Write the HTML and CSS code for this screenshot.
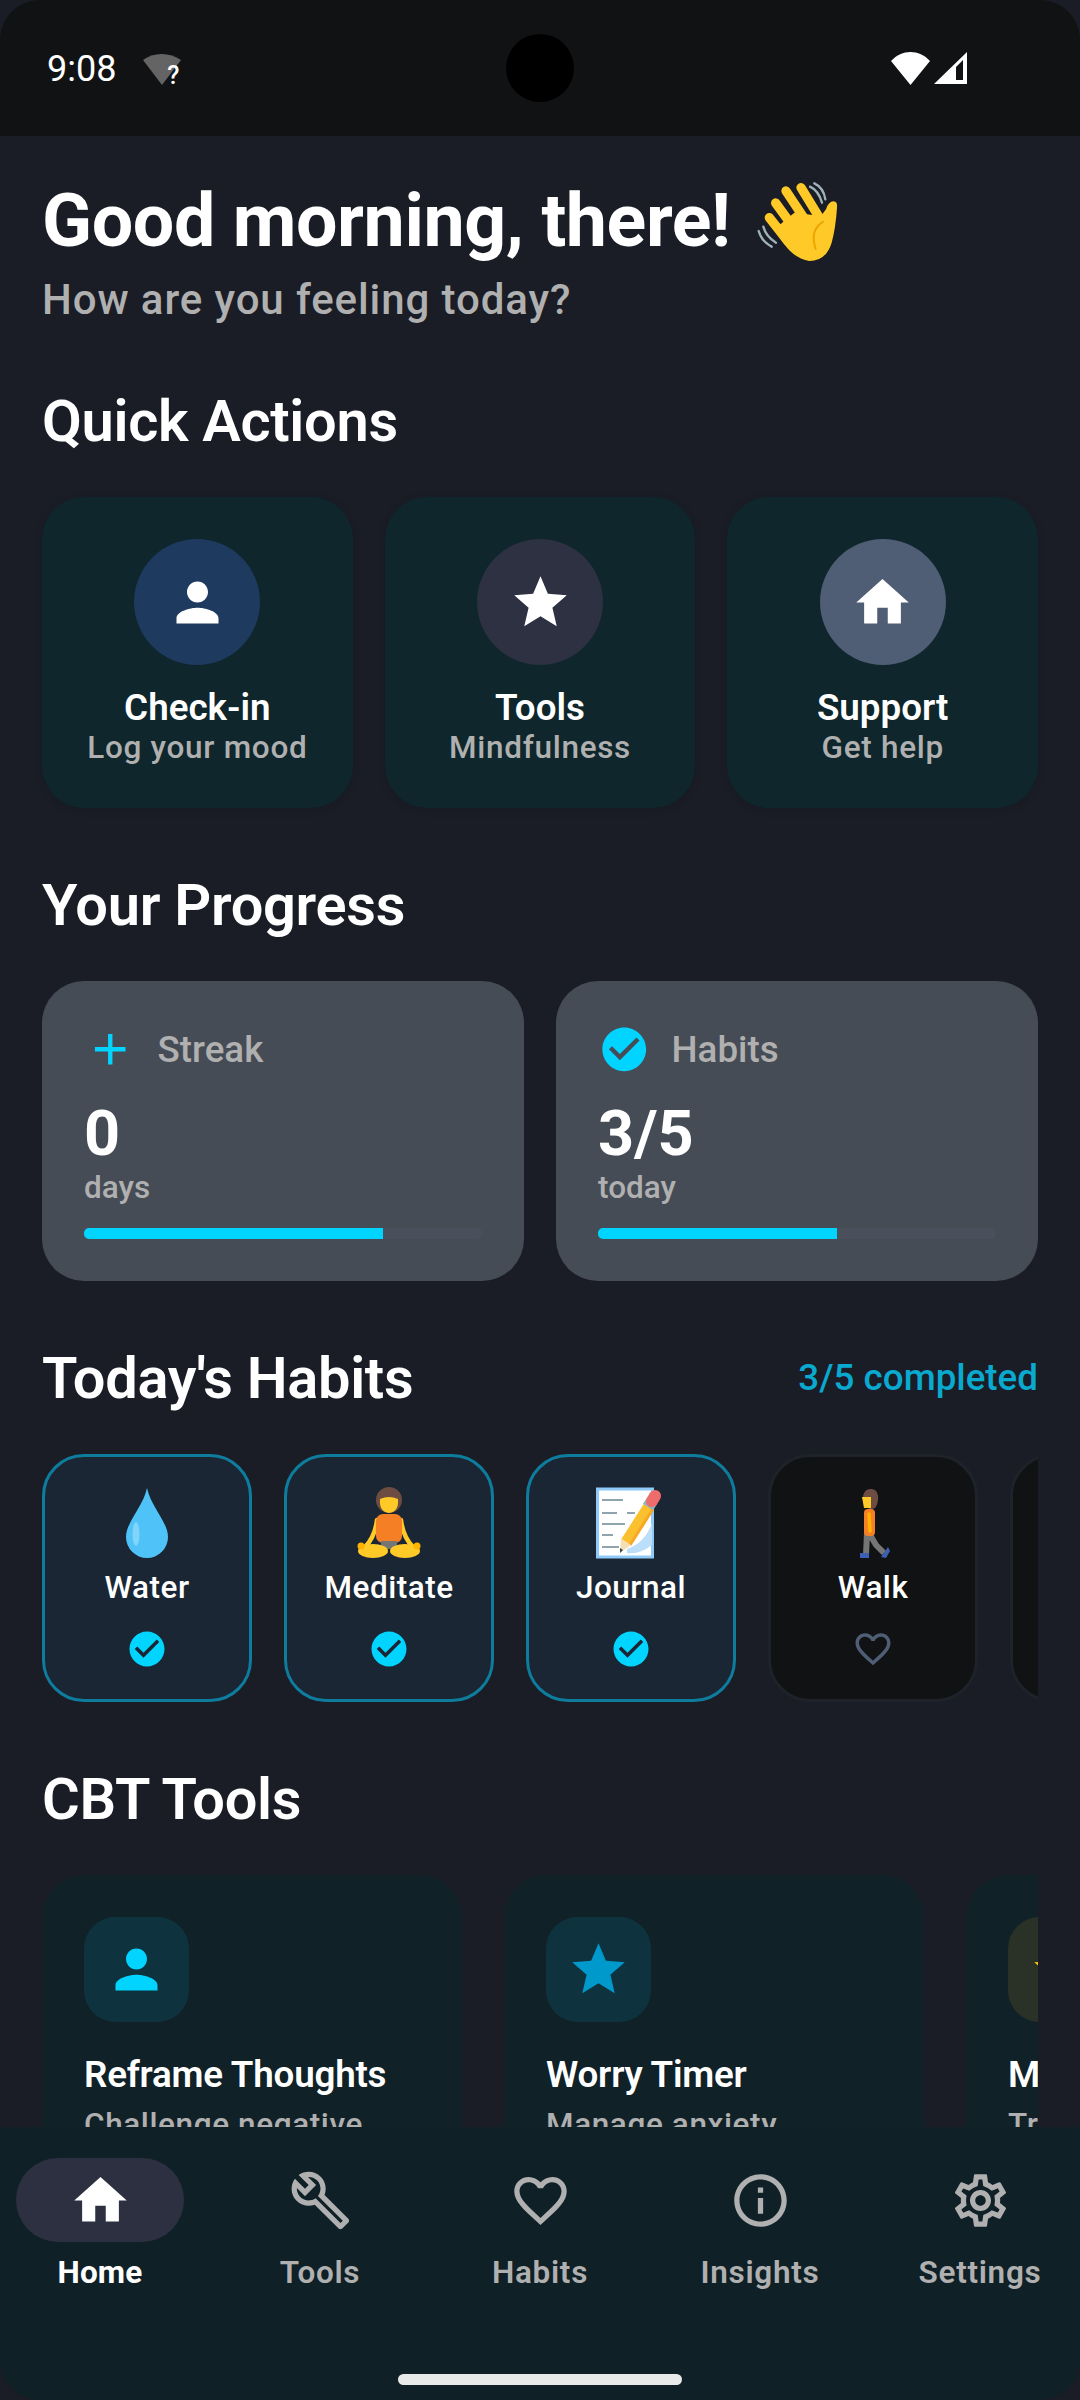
FILE: index.html
```html
<!DOCTYPE html>
<html lang="en">
<head>
  <meta charset="UTF-8">
  <meta name="viewport" content="width=device-width, initial-scale=1.0">
  <title>Wellness Home</title>
  <link rel="stylesheet" href="styles.css">
</head>
<body>
  <div class="app">
    <header class="status-bar">
      <div class="status-left">
        <span class="clock">9:08</span>
        <span class="wifi-unknown">
          <svg width="40" height="32" viewBox="0 0 40 32"><path class="wifi-dim" d="M1 7 C11 -1 28 -1 39 7 L20 32z"/></svg>
          <span class="wifi-mark">?</span>
        </span>
      </div>
      <div class="camera"></div>
      <div class="status-right">
        <svg width="40" height="33" viewBox="0 0 40 33"><path class="fill-white" d="M0 9 C11 -3 28 -3 39 9 L19.500 33z"/></svg>
        <svg width="33" height="32" viewBox="0 0 33 32"><path class="fill-white" d="M0 32 L33 0 V32z M22 15 V28 H29 V8z" fill-rule="evenodd"/></svg>
      </div>
    </header>

    <main class="content">
      <h1 class="greeting">Good morning, there!
        <svg class="wave" width="110" height="100" viewBox="0 0 330 300">
          <g fill="none" stroke="#9fb2ba" stroke-width="7" stroke-linecap="round">
            <path d="M207 47 Q232 58 243 95"/>
            <path d="M220 37 Q248 50 253 85"/>
            <path d="M67 167 Q75 197 105 215"/>
            <path d="M53 180 Q62 212 92 227"/>
          </g>
          <g stroke="#ffca28" stroke-width="28" stroke-linecap="round">
            <path d="M85 140 L140 210"/>
            <path d="M104 96 L165 180"/>
            <path d="M135 60 L195 150"/>
            <path d="M180 50 L235 140"/>
          </g>
          <path fill="#ffca28" d="M100 175 L160 125 L240 135 L255 115 Q262 92 278 91 Q290 92 288 110 Q284 170 272 215 Q255 270 205 270 Q160 262 130 220z"/>
          <path fill="none" stroke="#eda600" stroke-width="6" stroke-linecap="round" d="M246 152 Q216 172 218 205 Q220 222 224 234"/>
        </svg>
      </h1>
      <p class="greeting-sub">How are you feeling today?</p>

      <section class="section">
        <h2 class="section-title">Quick Actions</h2>
        <div class="quick-row">
          <div class="quick-card">
            <div class="quick-icon navy"><svg class="icon-lg fill-white" viewBox="0 0 24 24"><path d="M12 12c2.210 0 4-1.790 4-4s-1.790-4-4-4-4 1.790-4 4 1.790 4 4 4zm0 2c-2.670 0-8 1.340-8 4v2h16v-2c0-2.660-5.330-4-8-4z"/></svg></div>
            <div class="quick-title">Check-in</div>
            <div class="quick-sub">Log your mood</div>
          </div>
          <div class="quick-card">
            <div class="quick-icon slate"><svg class="icon-lg fill-white" viewBox="0 0 24 24"><path d="M12 17.270L18.180 21l-1.640-7.030L22 9.240l-7.190-.61L12 2 9.190 8.630 2 9.240l5.460 4.730L5.820 21z"/></svg></div>
            <div class="quick-title">Tools</div>
            <div class="quick-sub">Mindfulness</div>
          </div>
          <div class="quick-card">
            <div class="quick-icon steel"><svg class="icon-lg fill-white" viewBox="0 0 24 24"><path d="M10 20v-6h4v6h5v-8h3L12 3 2 12h3v8z"/></svg></div>
            <div class="quick-title">Support</div>
            <div class="quick-sub">Get help</div>
          </div>
        </div>
      </section>

      <section class="section">
        <h2 class="section-title">Your Progress</h2>
        <div class="progress-row">
          <div class="progress-card">
            <div class="progress-head">
              <svg class="icon-md fill-cyan" viewBox="0 0 24 24"><path d="M19 13h-6v6h-2v-6H5v-2h6V5h2v6h6v2z"/></svg>
              <span>Streak</span>
            </div>
            <div class="progress-value">0</div>
            <div class="progress-unit">days</div>
            <div class="bar"><div class="bar-fill" style="width: 75%"></div></div>
          </div>
          <div class="progress-card">
            <div class="progress-head">
              <svg class="icon-md fill-cyan" viewBox="0 0 24 24"><path d="M12 2C6.480 2 2 6.480 2 12s4.480 10 10 10 10-4.480 10-10S17.520 2 12 2zm-2 15l-5-5 1.410-1.410L10 14.170l7.590-7.590L19 8l-9 9z"/></svg>
              <span>Habits</span>
            </div>
            <div class="progress-value">3/5</div>
            <div class="progress-unit">today</div>
            <div class="bar"><div class="bar-fill" style="width: 60%"></div></div>
          </div>
        </div>
      </section>

      <section class="section">
        <div class="section-head">
          <h2 class="section-title">Today's Habits</h2>
          <span class="section-note">3/5 completed</span>
        </div>
        <div class="scroller">
          <div class="habit-card done">
            <svg class="emoji" viewBox="0 0 84 72">
              <path fill="#4fc3f7" d="M42 1 C46 20 63 35 63 50 a21 21 0 0 1 -42 0 C21 35 38 20 42 1z"/>
              <ellipse fill="#81d4fa" cx="31" cy="47" rx="3.500" ry="12"/>
            </svg>
            <div class="habit-name">Water</div>
            <svg class="icon-sm fill-cyan" viewBox="0 0 24 24"><path d="M12 2C6.480 2 2 6.480 2 12s4.480 10 10 10 10-4.480 10-10S17.520 2 12 2zm-2 15l-5-5 1.410-1.410L10 14.170l7.590-7.590L19 8l-9 9z"/></svg>
          </div>
          <div class="habit-card done">
            <svg class="emoji" viewBox="0 0 84 72">
              <circle fill="#6d4c41" cx="42" cy="13" r="13"/>
              <path fill="#ffca28" d="M33 12 Q42 8 51 12 Q52 25 42 26 Q32 25 33 12z"/>
              <path fill="none" stroke="#ffca28" stroke-width="4.500" stroke-linecap="round" d="M30 33 Q28 50 18 60 M54 33 Q56 50 66 60"/>
              <rect fill="#f57f25" x="29" y="27" width="26" height="29" rx="7"/>
              <rect fill="#757575" x="34" y="54" width="16" height="8"/>
              <ellipse fill="#ffca28" cx="26" cy="64" rx="15" ry="7"/>
              <ellipse fill="#ffca28" cx="58" cy="64" rx="15" ry="7"/>
              <circle fill="#ffb300" cx="14" cy="59" r="3.500"/>
              <circle fill="#ffb300" cx="70" cy="59" r="3.500"/>
            </svg>
            <div class="habit-name">Meditate</div>
            <svg class="icon-sm fill-cyan" viewBox="0 0 24 24"><path d="M12 2C6.480 2 2 6.480 2 12s4.480 10 10 10 10-4.480 10-10S17.520 2 12 2zm-2 15l-5-5 1.410-1.410L10 14.170l7.590-7.590L19 8l-9 9z"/></svg>
          </div>
          <div class="habit-card done">
            <svg class="emoji" viewBox="0 0 84 72">
              <rect fill="#fff" stroke="#90caf9" stroke-width="3" x="8.500" y="2" width="55" height="68"/>
              <path fill="none" stroke="#90a4ae" stroke-width="1.800" d="M13 13 H34 M13 26 H28 M38 26 H46 M13 37 H36 M13 48 H24 M13 60 H30"/>
              <path fill="#bbdefb" d="M38 62 Q56 56 63 36 V58 Q50 68 38 66z"/>
              <path stroke="#fbc02d" stroke-width="11" d="M37 55 L60 19"/>
              <path stroke="#f9a825" stroke-width="3" d="M41 58 L64 22"/>
              <path fill="#f5deb3" d="M32 52 L42 58 L31 66z"/>
              <path fill="#37474f" d="M31 61 L34 63 L31 66z"/>
              <path stroke="#90b4bd" stroke-width="12" d="M59 20 L63 14"/>
              <path stroke="#ef6c6c" stroke-width="12" stroke-linecap="round" d="M63 14 L66 9"/>
            </svg>
            <div class="habit-name">Journal</div>
            <svg class="icon-sm fill-cyan" viewBox="0 0 24 24"><path d="M12 2C6.480 2 2 6.480 2 12s4.480 10 10 10 10-4.480 10-10S17.520 2 12 2zm-2 15l-5-5 1.410-1.410L10 14.170l7.590-7.590L19 8l-9 9z"/></svg>
          </div>
          <div class="habit-card">
            <svg class="emoji" viewBox="0 0 84 72">
              <path fill="#6d4c41" d="M32 10 Q33 1 41 2 Q48 3 47 13 Q46 22 41 22 H38z"/>
              <path fill="#ffca28" d="M31 10 H40 V21 H33z"/>
              <path fill="none" stroke="#757575" stroke-width="6" d="M36 46 L35 68 M38 46 L45 58 L53 66"/>
              <rect fill="#f57f25" x="33" y="22" width="11" height="27" rx="4"/>
              <path fill="none" stroke="#ffb300" stroke-width="3.500" stroke-linecap="round" d="M38 27 L39 44"/>
              <path fill="#3f5fb5" d="M29 66 H38 V71 H29z M50 70 L57 60 L59 64 L55 71z"/>
            </svg>
            <div class="habit-name">Walk</div>
            <svg class="icon-sm fill-steel" viewBox="0 0 24 24"><path d="M16.500 3c-1.740 0-3.410.81-4.500 2.090C10.910 3.810 9.240 3 7.500 3 4.420 3 2 5.420 2 8.500c0 3.780 3.400 6.860 8.550 11.540L12 21.350l1.450-1.320C18.600 15.360 22 12.280 22 8.500 22 5.420 19.580 3 16.500 3zm-4.400 15.550l-.1.100-.1-.1C7.140 14.240 4 11.390 4 8.500 4 6.500 5.500 5 7.500 5c1.540 0 3.040.99 3.570 2.360h1.870C13.460 5.990 14.960 5 16.500 5c2 0 3.500 1.500 3.500 3.500 0 2.890-3.140 5.740-7.900 10.050z"/></svg>
          </div>
          <div class="habit-card"></div>
        </div>
      </section>

      <section class="section">
        <h2 class="section-title">CBT Tools</h2>
        <div class="scroller tools">
          <div class="tool-card">
            <div class="tool-icon teal"><svg class="icon-lg fill-cyan" viewBox="0 0 24 24"><path d="M12 12c2.210 0 4-1.790 4-4s-1.790-4-4-4-4 1.790-4 4 1.790 4 4 4zm0 2c-2.670 0-8 1.340-8 4v2h16v-2c0-2.660-5.330-4-8-4z"/></svg></div>
            <div class="tool-title">Reframe Thoughts</div>
            <div class="tool-sub">Challenge negative</div>
          </div>
          <div class="tool-card">
            <div class="tool-icon teal"><svg class="icon-lg fill-blue" viewBox="0 0 24 24"><path d="M12 17.270L18.180 21l-1.640-7.030L22 9.240l-7.190-.61L12 2 9.190 8.630 2 9.240l5.460 4.730L5.820 21z"/></svg></div>
            <div class="tool-title">Worry Timer</div>
            <div class="tool-sub">Manage anxiety</div>
          </div>
          <div class="tool-card">
            <div class="tool-icon olive"><svg class="icon-lg fill-amber" viewBox="0 0 24 24"><path d="M12 17.270L18.180 21l-1.640-7.030L22 9.240l-7.190-.61L12 2 9.190 8.630 2 9.240l5.460 4.730L5.820 21z"/></svg></div>
            <div class="tool-title">Mood Journal</div>
            <div class="tool-sub">Track patterns</div>
          </div>
        </div>
      </section>
    </main>

    <nav class="bottom-nav">
      <div class="nav-items">
        <div class="nav-item active">
          <div class="nav-pill"><svg class="icon-lg" viewBox="0 0 24 24"><path d="M10 20v-6h4v6h5v-8h3L12 3 2 12h3v8z"/></svg></div>
          <span>Home</span>
        </div>
        <div class="nav-item">
          <div class="nav-pill"><svg class="icon-lg" viewBox="0 0 24 24"><path d="M22.610 18.990l-9.080-9.080c.93-2.340.45-5.100-1.440-7C9.790.61 6.210.4 3.660 2.260L7.500 6.110 6.080 7.520 2.250 3.690C.39 6.230.6 9.820 2.900 12.110c1.860 1.860 4.570 2.350 6.890 1.480l9.110 9.110c.39.39 1.020.39 1.410 0l2.300-2.300c.4-.38.4-1.010 0-1.410zm-3 1.600l-9.460-9.460c-.61.45-1.290.72-2 .82-1.360.2-2.790-.21-3.830-1.250C3.370 9.760 2.930 8.500 3 7.260l3.090 3.090 4.240-4.240-3.090-3.090c1.240-.07 2.490.37 3.440 1.310 1.080 1.080 1.490 2.570 1.240 3.960-.12.71-.42 1.370-.88 1.960l9.450 9.450-.88.88z"/></svg></div>
          <span>Tools</span>
        </div>
        <div class="nav-item">
          <div class="nav-pill"><svg class="icon-lg" viewBox="0 0 24 24"><path d="M16.500 3c-1.740 0-3.410.81-4.500 2.090C10.910 3.810 9.240 3 7.500 3 4.420 3 2 5.420 2 8.500c0 3.780 3.400 6.860 8.550 11.540L12 21.350l1.450-1.320C18.600 15.360 22 12.280 22 8.500 22 5.420 19.580 3 16.500 3zm-4.400 15.550l-.1.100-.1-.1C7.140 14.240 4 11.390 4 8.500 4 6.500 5.500 5 7.500 5c1.540 0 3.040.99 3.570 2.360h1.870C13.460 5.990 14.960 5 16.500 5c2 0 3.500 1.500 3.500 3.500 0 2.890-3.140 5.740-7.900 10.050z"/></svg></div>
          <span>Habits</span>
        </div>
        <div class="nav-item">
          <div class="nav-pill"><svg class="icon-lg" viewBox="0 0 24 24"><path d="M11 7h2v2h-2zm0 4h2v6h-2zm1-9C6.480 2 2 6.480 2 12s4.480 10 10 10 10-4.480 10-10S17.520 2 12 2zm0 18c-4.410 0-8-3.590-8-8s3.590-8 8-8 8 3.590 8 8-3.590 8-8 8z"/></svg></div>
          <span>Insights</span>
        </div>
        <div class="nav-item">
          <div class="nav-pill"><svg class="icon-lg" viewBox="0 0 24 24"><path d="M19.430 12.980c.04-.32.07-.64.07-.98 0-.34-.03-.66-.07-.98l2.110-1.650c.19-.15.24-.42.12-.64l-2-3.460c-.09-.16-.26-.25-.44-.25-.06 0-.12.01-.17.03l-2.490 1c-.52-.4-1.080-.73-1.690-.98l-.38-2.650C14.460 2.180 14.250 2 14 2h-4c-.25 0-.46.18-.49.42l-.38 2.650c-.61.25-1.170.59-1.690.98l-2.490-1c-.06-.02-.12-.03-.18-.03-.17 0-.34.09-.43.25l-2 3.460c-.13.22-.07.49.12.64l2.110 1.650c-.04.32-.07.65-.07.98 0 .33.03.66.07.98l-2.110 1.650c-.19.15-.24.42-.12.64l2 3.460c.09.16.26.25.44.25.06 0 .12-.01.17-.03l2.490-1c.52.4 1.080.73 1.690.98l.38 2.650c.03.24.24.42.49.42h4c.25 0 .46-.18.49-.42l.38-2.650c.61-.25 1.170-.59 1.690-.98l2.490 1c.06.02.12.03.18.03.17 0 .34-.09.43-.25l2-3.460c.12-.22.07-.49-.12-.64l-2.110-1.650zm-1.980-1.710c.04.31.05.52.05.73 0 .21-.02.43-.05.73l-.14 1.130.89.7 1.080.84-.7 1.210-1.270-.51-1.040-.42-.9.68c-.43.32-.84.56-1.250.73l-1.060.43-.16 1.130-.2 1.350h-1.400l-.19-1.350-.16-1.130-1.060-.43c-.43-.18-.83-.41-1.230-.71l-.91-.7-1.060.43-1.270.51-.7-1.210 1.080-.84.89-.7-.14-1.130c-.03-.31-.05-.54-.05-.74s.02-.43.05-.73l.14-1.130-.89-.7-1.080-.84.7-1.210 1.270.51 1.040.42.9-.68c.43-.32.84-.56 1.250-.73l1.060-.43.16-1.130.2-1.350h1.390l.19 1.350.16 1.130 1.060.43c.43.18.83.41 1.230.71l.91.7 1.060-.43 1.270-.51.7 1.210-1.070.85-.89.7.14 1.130zM12 8c-2.210 0-4 1.790-4 4s1.790 4 4 4 4-1.790 4-4-1.790-4-4-4zm0 6c-1.100 0-2-.9-2-2s.9-2 2-2 2 .9 2 2-.9 2-2 2z"/></svg></div>
          <span>Settings</span>
        </div>
      </div>
      <div class="home-indicator"></div>
    </nav>
  </div>
</body>
</html>
```
FILE: styles.css
```css
* {
  box-sizing: border-box;
}
html, body {
  margin: 0;
  padding: 0;
  background-color: #1a1d26;
}
body {
  font-family: Roboto, "Liberation Sans", sans-serif;
  color: #fff;
}
h1, h2, p {
  margin: 0;
}
svg {
  display: block;
  flex-shrink: 0;
}

.app {
  width: 1080px;
  height: 2400px;
  display: flex;
  flex-direction: column;
  background-color: #1a1d26;
  border-radius: 40px;
  overflow: hidden;
}

/* status bar */
.status-bar {
  height: 136px;
  flex-shrink: 0;
  display: grid;
  grid-template-columns: 1fr 68px 1fr;
  background-color: #111214;
  padding-top: 34px;
}
.status-left, .status-right {
  display: flex;
  height: 68px;
  align-items: center;
}
.status-left {
  padding-left: 47px;
  gap: 26px;
}
.status-right {
  justify-content: flex-end;
  padding-right: 113px;
  gap: 3px;
}
.clock {
  font-size: 36px;
  line-height: 42px;
  margin-top: 2px;
}
.wifi-unknown {
  position: relative;
  display: block;
  margin-top: 2px;
}
.wifi-dim {
  fill: #646464;
}
.wifi-mark {
  position: absolute;
  right: 3px;
  bottom: -3px;
  font-size: 25px;
  line-height: 25px;
  font-weight: 500;
}
.camera {
  width: 68px;
  height: 68px;
  border-radius: 50%;
  background-color: #000;
}
.fill-white { fill: #fff; }
.fill-cyan { fill: #00d4ff; }
.fill-blue { fill: #0099cc; }
.fill-amber { fill: #ffc107; }
.fill-steel { fill: #4f5d75; }
.icon-lg { width: 63px; height: 63px; }
.icon-md { width: 52.5px; height: 52.5px; }
.icon-sm { width: 42px; height: 42px; }

/* scrolling content */
.content {
  flex: 1;
  min-height: 0;
  overflow: hidden;
  padding: 42px 42px 0;
}
.greeting {
  display: flex;
  align-items: center;
  gap: 10px;
  font-size: 73.5px;
  line-height: 86px;
  font-weight: 700;
  letter-spacing: -0.4px;
}
.wave {
  margin: -7px 0 -7px 0;
}
.greeting-sub {
  margin-top: 12px;
  font-size: 42px;
  line-height: 48px;
  font-weight: 500;
  color: #b0b0b0;
  letter-spacing: 0.9px;
}

.section {
  margin-top: 63.5px;
}
.section-head {
  display: flex;
  justify-content: space-between;
  align-items: center;
}
.section-title {
  font-size: 57.75px;
  line-height: 66px;
  font-weight: 600;
  letter-spacing: -0.3px;
  margin-bottom: 43.5px;
}
.section-note {
  font-size: 36.75px;
  font-weight: 500;
  color: #0aa9cf;
  margin-bottom: 43.5px;
}

/* quick actions */
.quick-row {
  display: flex;
  gap: 32px;
}
.quick-card {
  flex: 1;
  height: 311px;
  padding-top: 42px;
  border-radius: 42px;
  background-color: #0e262c;
  box-shadow: 0 2px 8px rgba(0, 0, 0, 0.12);
  display: flex;
  flex-direction: column;
  align-items: center;
}
.quick-icon {
  width: 126px;
  height: 126px;
  border-radius: 50%;
  display: flex;
  align-items: center;
  justify-content: center;
  margin-bottom: 19.5px;
}
.navy { background-color: #1e3a5f; }
.slate { background-color: #2d3142; }
.steel { background-color: #4f5d75; }
.quick-title {
  font-size: 36.75px;
  line-height: 46px;
  font-weight: 600;
}
.quick-sub {
  font-size: 31.5px;
  line-height: 34px;
  font-weight: 500;
  color: #b0b0b0;
  letter-spacing: 0.7px;
}

/* progress */
.progress-row {
  display: flex;
  gap: 32px;
}
.progress-card {
  flex: 1;
  height: 300px;
  padding: 42px;
  border-radius: 42px;
  background-color: #464c56;
}
.progress-head {
  display: flex;
  align-items: center;
  gap: 21px;
  font-size: 36.75px;
  font-weight: 500;
  color: #b0b0b0;
}
.progress-value {
  margin-top: 24px;
  font-size: 63px;
  line-height: 68px;
  font-weight: 700;
}
.progress-unit {
  margin-top: 1px;
  font-size: 31.5px;
  line-height: 38px;
  font-weight: 500;
  color: #b0b0b0;
}
.bar {
  height: 10.5px;
  margin-top: 21.5px;
  border-radius: 5px;
  background-color: #4a4f5c;
  overflow: hidden;
}
.bar-fill {
  height: 100%;
  background-color: #00d4ff;
}

/* horizontal rows */
.scroller {
  display: flex;
  gap: 32px;
  overflow: hidden;
}
.habit-card {
  width: 210px;
  height: 248px;
  flex-shrink: 0;
  padding-top: 30px;
  border: 3px solid #1e2229;
  border-radius: 42px;
  background-color: #111214;
  display: flex;
  flex-direction: column;
  align-items: center;
}
.habit-card.done {
  background-color: #1a2634;
  border-color: #0e7c9d;
}
.emoji {
  width: 84px;
  height: 72px;
}
.habit-name {
  margin: 7px 0 18px;
  font-size: 31.5px;
  line-height: 44px;
  font-weight: 500;
  letter-spacing: 0.5px;
}

.tools {
  gap: 42px;
}
.tool-card {
  width: 420px;
  height: 400px;
  flex-shrink: 0;
  padding: 42px;
  border-radius: 42px;
  background-color: #102127;
}
.tool-icon {
  width: 105px;
  height: 105px;
  border-radius: 31.5px;
  display: flex;
  align-items: center;
  justify-content: center;
}
.teal { background-color: #0e333f; }
.olive { background-color: #2a3227; }
.tool-title {
  margin-top: 29px;
  font-size: 36.75px;
  line-height: 48px;
  font-weight: 600;
  letter-spacing: -0.2px;
  white-space: nowrap;
}
.tool-sub {
  margin-top: 4px;
  font-size: 31.5px;
  line-height: 44px;
  font-weight: 500;
  color: #b0b0b0;
  letter-spacing: 0.6px;
  white-space: nowrap;
}

/* bottom nav */
.bottom-nav {
  height: 273px;
  flex-shrink: 0;
  background-color: #0f2027;
  padding-top: 31px;
}
.nav-items {
  display: flex;
  margin: 0 -10px;
}
.nav-item {
  flex: 1;
  display: flex;
  flex-direction: column;
  align-items: center;
  font-size: 31.5px;
  line-height: 40px;
  font-weight: 600;
  letter-spacing: 0.7px;
  color: #b0b0b0;
  fill: #b0b0b0;
}
.nav-pill {
  width: 168px;
  height: 84px;
  border-radius: 42px;
  display: flex;
  align-items: center;
  justify-content: center;
  margin-bottom: 11px;
}
.nav-item.active {
  color: #fff;
  fill: #fff;
  font-weight: 700;
  letter-spacing: 0.2px;
}
.nav-item.active .nav-pill {
  background-color: #2d3040;
}
.home-indicator {
  width: 284px;
  height: 11px;
  margin: 81px auto 0;
  border-radius: 6px;
  background-color: #e8eaea;
}
```
